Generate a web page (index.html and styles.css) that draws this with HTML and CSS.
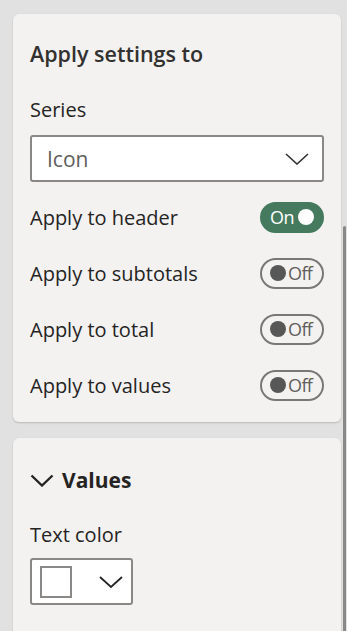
FILE: index.html
```html
<!DOCTYPE html>
<html lang="en">
<head>
  <meta charset="UTF-8">
  <title>Format pane</title>
  <link rel="stylesheet" href="styles.css">
</head>
<body>

<div class="pane">
  <div class="card">
    <h2 class="card-title">Apply settings to</h2>

    <div class="field-label">Series</div>
    <div class="dropdown">
      <span class="dropdown-value">Icon</span>
      <svg class="chevron" width="24" height="12" viewBox="0 0 24 12">
        <path d="M1 1 L12 11 L23 1" fill="none" stroke="#323130" stroke-width="1.6"/>
      </svg>
    </div>

    <div class="toggle-row">
      <span>Apply to header</span>
      <div class="toggle on"><span class="toggle-text">On</span><span class="knob"></span></div>
    </div>
    <div class="toggle-row">
      <span>Apply to subtotals</span>
      <div class="toggle"><span class="knob"></span><span class="toggle-text">Off</span></div>
    </div>
    <div class="toggle-row">
      <span>Apply to total</span>
      <div class="toggle"><span class="knob"></span><span class="toggle-text">Off</span></div>
    </div>
    <div class="toggle-row">
      <span>Apply to values</span>
      <div class="toggle"><span class="knob"></span><span class="toggle-text">Off</span></div>
    </div>
  </div>

  <div class="card card-open">
    <div class="section-head">
      <svg class="section-chevron" width="24" height="13" viewBox="0 0 24 13">
        <path d="M1.5 1.5 L12 11.5 L22.5 1.5" fill="none" stroke="#252423" stroke-width="2.4"/>
      </svg>
      <span>Values</span>
    </div>

    <div class="field-label label-color">Text color</div>
    <div class="color-picker">
      <span class="swatch"></span>
      <svg class="chevron" width="24" height="12" viewBox="0 0 24 12">
        <path d="M1 1 L12 11 L23 1" fill="none" stroke="#252423" stroke-width="1.8"/>
      </svg>
    </div>

    <div class="field-label label-next">Background color</div>
  </div>
</div>

<div class="scrollbar"></div>

</body>
</html>
```

FILE: styles.css
```css
body {
  margin: 0;
  background: #e1e1e1;
  font-family: "Open Sans", "Noto Sans", sans-serif;
  color: #252423;
  height: 631px;
  overflow: hidden;
}

.pane {
  padding: 14px 0 0 13px;
}

.card {
  width: 328px;
  box-sizing: border-box;
  background: #f3f2f1;
  border-radius: 6px;
  box-shadow: 0 1px 2px rgba(0,0,0,0.18);
  padding: 26px 17px 9px 17px;
  margin-bottom: 16px;
}

.card-title {
  margin: 0;
  font-size: 21.5px;
  line-height: 28px;
  font-weight: 600;
  color: #323130;
}

.field-label {
  font-size: 20px;
  line-height: 28px;
  margin-top: 28px;
}

.dropdown {
  margin-top: 11px;
  height: 47px;
  box-sizing: border-box;
  border: 2px solid #8a8886;
  border-radius: 3px;
  background: white;
  display: flex;
  align-items: center;
  justify-content: space-between;
  padding: 0 13px 0 15px;
}

.dropdown-value {
  font-size: 21px;
  color: #605e5c;
}

.toggle-row {
  height: 56px;
  display: flex;
  align-items: center;
  justify-content: space-between;
  font-size: 20px;
}

.dropdown + .toggle-row {
  margin-top: 7px;
}

.toggle {
  width: 64px;
  height: 31px;
  box-sizing: border-box;
  border: 2px solid #7a7876;
  border-radius: 16px;
  display: flex;
  align-items: center;
  padding: 0 6px 0 8px;
  gap: 2px;
}

.toggle .knob {
  width: 16px;
  height: 16px;
  border-radius: 50%;
  background: #575757;
  flex: none;
}

.toggle-text {
  font-size: 18px;
  line-height: 20px;
  color: #605e5c;
  letter-spacing: -0.6px;
}

.toggle.on {
  background: #457a5f;
  border-color: #457a5f;
  padding: 0 7px 0 8px;
  gap: 4px;
}

.toggle.on .toggle-text {
  color: white;
}

.toggle.on .knob {
  background: white;
}

.card-open {
  padding: 28px 17px 0 17px;
  height: 220px;
  margin-bottom: 0;
}

.section-head {
  display: flex;
  align-items: center;
  gap: 8px;
  font-size: 21px;
  line-height: 28px;
  font-weight: 700;
}

.label-color {
  margin-top: 27px;
}

.color-picker {
  margin-top: 9px;
  width: 103px;
  height: 47px;
  box-sizing: border-box;
  border: 2px solid #8a8886;
  border-radius: 3px;
  background: white;
  display: flex;
  align-items: center;
  justify-content: space-between;
  padding: 0 8px 0 8px;
}

.swatch {
  width: 32px;
  height: 32px;
  box-sizing: border-box;
  border: 2px solid #8a8886;
  background: white;
}

.label-next {
  margin-top: 20px;
}

.scrollbar {
  position: absolute;
  top: 226px;
  left: 343px;
  width: 3px;
  height: 420px;
  border-radius: 2px;
  background: #8a8886;
}
```
